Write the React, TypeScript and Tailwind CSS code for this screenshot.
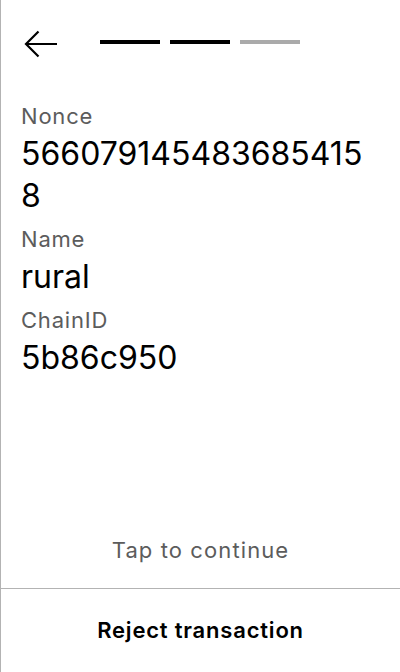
import React from "react";

export default function App() {
  return (
    <div
      className="w-[400px] h-[672px] bg-white border-l border-[#b3b3b3] flex flex-col text-black"
      style={{ fontFamily: "Inter, 'Noto Sans', sans-serif" }}
    >
      <div className="h-[102px] flex items-start pt-[30px] pl-[23px]">
        <svg width="34" height="28" viewBox="0 0 34 28" className="shrink-0">
          <path d="M33 14H2.5M14.5 1.5L2 14l12.5 12.5" fill="none" stroke="#000" strokeWidth="2.2" />
        </svg>
        <div className="flex gap-[10px] ml-[42px] mt-[10px]">
          <div className="w-[60px] h-[4px] bg-black" />
          <div className="w-[60px] h-[4px] bg-black" />
          <div className="w-[60px] h-[4px] bg-[#aaaaaa]" />
        </div>
      </div>
      <div className="px-[20px] flex flex-col">
        <div className="text-[22px] leading-[28px] tracking-[0.8px] text-[#5c5c5c]">Nonce</div>
        <div className="text-[32px] leading-[42px] mt-[3px] break-all">5660791454836854158</div>
        <div className="text-[22px] leading-[28px] tracking-[0.8px] text-[#5c5c5c] mt-[8px]">Name</div>
        <div className="text-[32px] leading-[42px] mt-[3px] break-all">rural</div>
        <div className="text-[22px] leading-[28px] tracking-[0.8px] text-[#5c5c5c] mt-[8px]">ChainID</div>
        <div className="text-[32px] leading-[42px] mt-[3px] break-all">5b86c950</div>
      </div>
      <div className="flex-1" />
      <div className="h-[76px] flex items-center justify-center text-[22px] tracking-[1.1px] text-[#5c5c5c]">Tap to continue</div>
      <div className="h-px bg-[#b3b3b3]" />
      <div className="h-[83px] flex items-center justify-center text-[22px] tracking-[0.8px] font-semibold">Reject transaction</div>
    </div>
  );
}
